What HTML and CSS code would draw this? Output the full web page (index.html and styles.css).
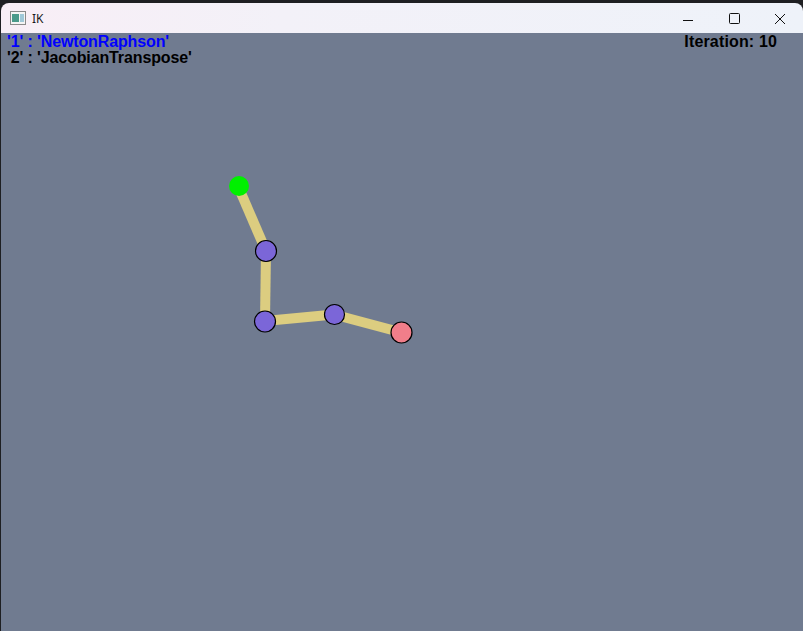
FILE: index.html
```html
<!DOCTYPE html>
<html>
<head>
<meta charset="utf-8">
<link rel="stylesheet" href="styles.css">
</head>
<body>
<div class="desk">
  <div class="window">
    <div class="titlebar">
      <div class="title">
        <svg class="appicon" width="16" height="14" viewBox="0 0 16 14">
          <rect x="0.5" y="0.5" width="15" height="13" fill="#f4f4f4" stroke="#8a8a8a"/>
          <rect x="2" y="3" width="7" height="8" fill="#4a9a8a"/>
          <rect x="10" y="3" width="4" height="8" fill="#9fc8d8"/>
        </svg>
        <span class="name">IK</span>
      </div>
      <div class="controls">
        <svg class="ctl" width="46" height="30" viewBox="0 0 46 30"><line x1="18" y1="17.5" x2="28" y2="17.5" stroke="#111" stroke-width="1"/></svg>
        <svg class="ctl" width="46" height="30" viewBox="0 0 46 30"><rect x="18.5" y="10.5" width="10" height="10" fill="none" stroke="#111" stroke-width="1" rx="1"/></svg>
        <svg class="ctl" width="46" height="30" viewBox="0 0 46 30"><path d="M18 11 L28 21 M28 11 L18 21" stroke="#111" stroke-width="1"/></svg>
      </div>
    </div>
    <div class="canvas">
      <svg class="scene" width="802" height="598" viewBox="1 33 802 598">
        <g stroke="#dccd80" stroke-width="10" stroke-linecap="butt">
          <line x1="238" y1="186" x2="266" y2="251"/>
          <line x1="266" y1="251" x2="265" y2="321"/>
          <line x1="265" y1="321" x2="334" y2="314.5"/>
          <line x1="334" y1="314.5" x2="401.5" y2="332.5"/>
        </g>
        <circle cx="239" cy="186" r="10" fill="#00f000"/>
        <g stroke="#000" stroke-width="1.2">
          <circle cx="266" cy="251" r="10.5" fill="#7b66d8"/>
          <circle cx="265" cy="321.5" r="10.5" fill="#7b66d8"/>
          <circle cx="334.5" cy="314.5" r="10" fill="#7b66d8"/>
          <circle cx="401.5" cy="332.5" r="10.5" fill="#f17e8a"/>
        </g>
      </svg>
      <div class="hud">
        <div class="modes">
          <div class="mode active">'1' : 'NewtonRaphson'</div>
          <div class="mode">'2' : 'JacobianTranspose'</div>
        </div>
        <div class="iter">Iteration: 10</div>
      </div>
    </div>
  </div>
</div>
</body>
</html>
```
FILE: styles.css
```css
html, body {
  margin: 0;
  padding: 0;
  width: 803px;
  height: 631px;
  overflow: hidden;
  background: #1e1f22;
}
.desk {
  width: 803px;
  height: 631px;
  padding-top: 3px;
  padding-left: 1px;
  box-sizing: border-box;
  display: flex;
}
.window {
  flex: 1;
  display: flex;
  flex-direction: column;
  border-radius: 8px 8px 0 0;
  overflow: hidden;
}
.titlebar {
  height: 30px;
  display: flex;
  justify-content: space-between;
  align-items: center;
  background: linear-gradient(90deg, #f8eef6 0%, #f3f1f8 35%, #eef2f9 100%);
}
.title {
  display: flex;
  align-items: center;
  padding-left: 9px;
  gap: 6px;
}
.appicon { display: block; }
.name {
  font-family: "Noto Sans", "DejaVu Sans", sans-serif;
  font-size: 12px;
  color: #1a1a1a;
}
.controls {
  display: flex;
}
.ctl { display: block; }
.canvas {
  flex: 1;
  position: relative;
  background: #707b90;
}
.scene {
  position: absolute;
  left: 0;
  top: 0;
}
.hud {
  position: relative;
  display: flex;
  justify-content: space-between;
  padding: 1px 26px 0 6px;
  font-family: "Liberation Sans", Arial, sans-serif;
  font-weight: bold;
  font-size: 16px;
  line-height: 16px;
  letter-spacing: -0.12px;
  color: #000;
}
.iter { letter-spacing: 0.15px; }
.mode.active { color: #0000ff; }
```
